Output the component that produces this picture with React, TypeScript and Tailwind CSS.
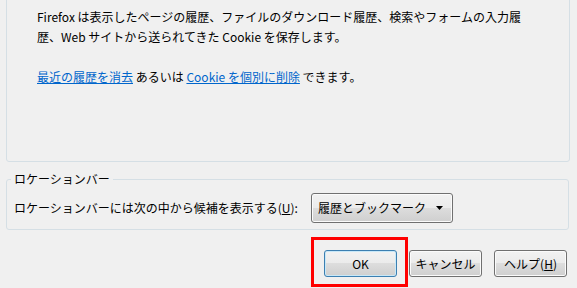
import React from "react";

const btnBase =
  "w-[73px] h-[27px] rounded-[3px] border bg-[linear-gradient(#f2f2f2,#ebebeb_50%,#dddddd_50%,#cfcfcf)] text-[12px] leading-[16px] text-black flex items-center justify-center";
const btn = btnBase + " border-[#707070] shadow-[inset_0_0_0_1px_#fbfbfb]";
const okBtn = btnBase + " border-[#3c7fb1] shadow-[inset_0_0_0_1px_#c8e8f8]";

export default function App() {
  return (
    <div className="w-[577px] h-[288px] overflow-hidden bg-[#f0f0f0] text-[12px] text-black font-['Noto_Sans_CJK_JP',sans-serif]">
      <div className="-mt-[4px] ml-[6px] mr-[7px] h-[166px] rounded-[3px] border border-[#d5dfe5] pl-[30px] pt-[10px] leading-[20px] whitespace-nowrap">
        <p>
          Firefox は表示したページの履歴、ファイルのダウンロード履歴、検索やフォームの入力履
          <br />
          歴、Web サイトから送られてきた Cookie を保存します。
        </p>
        <p className="mt-[20px]">
          <a href="#" className="text-[#0066cc] underline">
            最近の履歴を消去
          </a>{" "}
          あるいは{" "}
          <a href="#" className="text-[#0066cc] underline">
            Cookie を個別に削除
          </a>{" "}
          できます。
        </p>
      </div>

      <fieldset className="mt-[9px] ml-[6px] mr-[8px] rounded-[3px] border border-[#d5dfe5] pl-[7px] pr-[7px] pt-[6px] pb-[6px]">
        <legend className="-ml-[3px] px-[3px] leading-[16px]">ロケーションバー</legend>
        <div className="flex items-center gap-[13px]">
          <span className="leading-[16px]">
            ロケーションバーには次の中から候補を表示する(<span className="underline">U</span>):
          </span>
          <div className="w-[142px] h-[30px] rounded-[3px] border border-[#707070] bg-[linear-gradient(#f2f2f2,#ebebeb_50%,#dddddd_50%,#cfcfcf)] shadow-[inset_0_0_0_1px_#fbfbfb] flex items-center justify-between pl-[6px] pr-[9px]">
            <span className="leading-[16px]">履歴とブックマーク</span>
            <svg width="7" height="4" viewBox="0 0 7 4">
              <polygon points="0,0 7,0 3.5,4" fill="#000" />
            </svg>
          </div>
        </div>
      </fieldset>

      <div className="mt-[20px] flex justify-end gap-[12px] pr-[10px]">
        <div className="relative">
          <button className={okBtn}>OK</button>
          <div className="absolute -left-[13px] -right-[11px] -top-[13px] -bottom-[10px] border-[3px] border-[#ff0000] pointer-events-none" />
        </div>
        <button className={btn}>キャンセル</button>
        <button className={btn}>
          ヘルプ(<span className="underline">H</span>)
        </button>
      </div>
    </div>
  );
}
